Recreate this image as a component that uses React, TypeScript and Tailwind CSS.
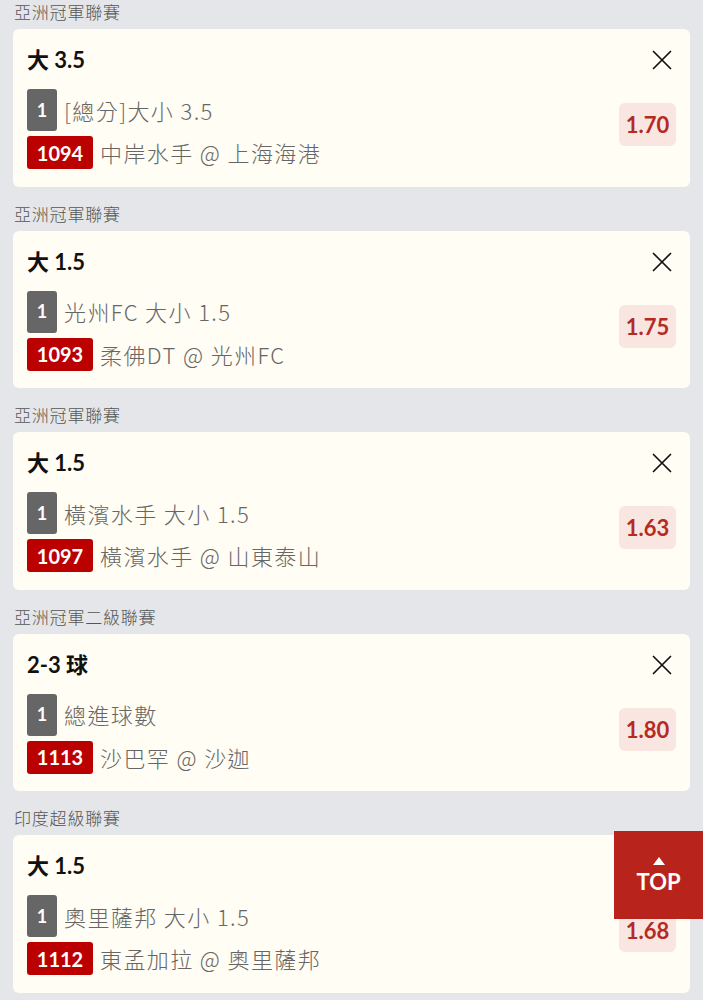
type Bet = {
  league: string
  title: string
  market: string
  code: string
  match: string
  odds: string
}

const bets: Bet[] = [
  { league: '亞洲冠軍聯賽', title: '大 3.5', market: '[總分]大小 3.5', code: '1094', match: '中岸水手 @ 上海海港', odds: '1.70' },
  { league: '亞洲冠軍聯賽', title: '大 1.5', market: '光州FC 大小 1.5', code: '1093', match: '柔佛DT @ 光州FC', odds: '1.75' },
  { league: '亞洲冠軍聯賽', title: '大 1.5', market: '橫濱水手 大小 1.5', code: '1097', match: '橫濱水手 @ 山東泰山', odds: '1.63' },
  { league: '亞洲冠軍二級聯賽', title: '2-3 球', market: '總進球數', code: '1113', match: '沙巴罕 @ 沙迦', odds: '1.80' },
  { league: '印度超級聯賽', title: '大 1.5', market: '奧里薩邦 大小 1.5', code: '1112', match: '東孟加拉 @ 奧里薩邦', odds: '1.68' },
]

const font = "font-['Lato','Noto_Sans_CJK_TC','Noto_Sans',sans-serif]"
const cjk = "font-['Noto_Sans_CJK_TC','Noto_Sans',sans-serif]"

function CloseIcon() {
  return (
    <svg width="20" height="20" viewBox="0 0 20 20" fill="none" stroke="#111" strokeWidth="1.7" strokeLinecap="round">
      <path d="M1.5 1.5L18.5 18.5M18.5 1.5L1.5 18.5" />
    </svg>
  )
}

function BetCard({ bet }: { bet: Bet }) {
  return (
    <div className="mx-[13px] flex h-[157.5px] rounded-md bg-[#fffdf4] pl-[14px] pr-[14px] pt-[16px]">
      <div className="flex flex-1 flex-col">
        <div className="h-[30px] text-[22px] font-bold leading-[30px] text-[#111]">{bet.title}</div>
        <div className="mt-[14px] flex h-[42px] items-center gap-[7px]">
          <span className="flex h-[42px] w-[30px] items-center justify-center rounded-[3px] bg-[#666] text-[18px] font-bold text-white">
            1
          </span>
          <span className={`${cjk} text-[22px] font-light tracking-[1.4px] text-[#666]`}>{bet.market}</span>
        </div>
        <div className="mt-[5px] flex h-[33px] items-center gap-[7px]">
          <span className="flex h-[33px] w-[66px] items-center justify-center rounded-[3px] bg-[#bb0000] text-[20px] font-bold text-white">
            {bet.code}
          </span>
          <span className={`${cjk} text-[22px] font-light tracking-[1.4px] text-[#666]`}>{bet.match}</span>
        </div>
      </div>
      <div className="flex w-[60px] flex-col items-end">
        <div className="mt-[5px] mr-[4px]">
          <CloseIcon />
        </div>
        <div className="mt-[33px] flex h-[43px] w-[57px] items-center justify-center rounded-md bg-[#f9e6e1] text-[22px] font-bold text-[#b52a22]">
          {bet.odds}
        </div>
      </div>
    </div>
  )
}

export default function App() {
  return (
    <div className={`${font} relative h-[1000px] w-[703px] overflow-hidden bg-[#e4e6e9]`}>
      <div className="flex flex-col gap-[15px]">
        {bets.map((bet, i) => (
          <div key={i}>
            <div className={`${cjk} flex h-[29px] items-center px-[14px] pb-[5px] text-[17px] font-light tracking-[0.8px] text-[#555]`}>
              {bet.league}
            </div>
            <BetCard bet={bet} />
          </div>
        ))}
      </div>

      {/* back to top */}
      <button className="absolute left-[614px] top-[831px] flex h-[88px] w-[89px] flex-col items-center justify-center bg-[#b8231c] text-white">
        <svg width="12" height="8" viewBox="0 0 12 8" className="mb-[5px]">
          <path d="M6 0L12 8H0Z" fill="#fff" />
        </svg>
        <span className="text-[22px] font-bold leading-[24px]">TOP</span>
      </button>
    </div>
  )
}
